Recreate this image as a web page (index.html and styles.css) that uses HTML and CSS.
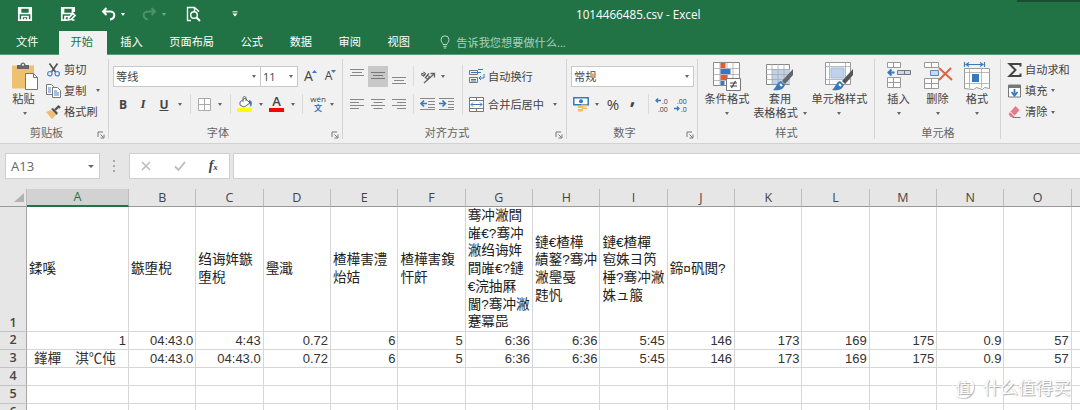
FILE: index.html
```html
<!DOCTYPE html>
<html lang="zh-CN">
<head>
<meta charset="utf-8">
<title>1014466485.csv - Excel</title>
<link rel="stylesheet" href="styles.css">
</head>
<body>
<div class="app">
<header class="titlebar">
  <div class="quick">
    <svg width="16" height="16" viewBox="0 0 16 16" fill="none" stroke="#fff" stroke-width="1.700"><path d="M1.800 1.800h12.400v12.400H1.800zM3.500 2v5.500h9V2M5 14v-3.500h6V14M8 12v2"/></svg>
    <svg width="16" height="16" viewBox="0 0 16 16" fill="none" stroke="#fff" stroke-width="1.700"><path d="M14.200 6V1.800H1.800v12.400H7M3.500 2v5.500h9V2M5 14v-3.500h4M8 14l1-2.500 4-4 2 2-4 4zM12 14h2.500"/></svg>
    <svg width="15" height="14" viewBox="0 0 15 14" fill="none" stroke="#fff" stroke-width="2"><path d="M5.500 1L2 4.500 5.500 8M2 4.500h7c6 0 5.500 7 0 8"/></svg>
    <i class="arrow white"></i>
    <svg class="dim" width="15" height="14" viewBox="0 0 15 14" fill="none" stroke="#8fc3a5" stroke-width="2"><path d="M9.500 1L13 4.500 9.500 8M13 4.500H6c-6 0-5.500 7 0 8"/></svg>
    <i class="arrow white dim"></i>
    <svg width="15" height="16" viewBox="0 0 15 16" fill="none" stroke="#fff" stroke-width="1.400"><path d="M5 14.500H1.500v-13h7l4 3.500v1M8.500 1.500V5"/><circle cx="8" cy="9" r="3.300"/><path d="M10.500 11.500l3.500 3.500" stroke-width="2"/></svg>
    <svg width="6" height="6" viewBox="0 0 6 6"><path d="M.5.8h5" stroke="#fff"/><path d="M.5 2.500h5L3 5.500z" fill="#fff"/></svg>
  </div>
  <div class="title">1014466485.csv - Excel</div>
  <div class="shade"></div>
</header>
<nav class="tabs">
  <span>文件</span><span class="active">开始</span><span>插入</span><span>页面布局</span><span>公式</span><span>数据</span><span>审阅</span><span>视图</span>
  <div class="tell"><svg width="10" height="14" viewBox="0 0 10 14" fill="none" stroke="#b5d8c4"><path d="M3 9.500C3 8 1 7 1 4.800a4 4 0 0 1 8 0C9 7 7 8 7 9.500zM3.200 11.300h3.600M3.800 13h2.400"/></svg>告诉我您想要做什么...</div>
</nav>
<section class="ribbon">
  <div class="group g-clip">
    <div class="body clip">
      <div class="big paste">
        <svg width="28" height="29" viewBox="0 0 28 29"><path d="M1 3.500h22v23H1z" fill="#eec16f"/><path d="M6 3h3.500c0-3.500 5-3.500 5 0H18v4H6z" fill="#666"/><circle cx="12" cy="2.700" r="1" fill="#fff"/><path d="M14.500 11.500h8l4 4v12h-12z" fill="#fff" stroke="#777"/><path d="M22.500 11.500v4h4" fill="none" stroke="#777"/></svg>
        <span>粘贴</span><i class="arrow"></i>
      </div>
      <div class="list">
        <div class="item"><svg width="14" height="14" viewBox="0 0 14 14" fill="none"><path d="M3 .5l6 8.500M11 .5L5 9" stroke="#555" stroke-width="1.700"/><circle cx="3.300" cy="10.700" r="2.200" stroke="#4a83c3" stroke-width="1.200"/><circle cx="10.700" cy="10.700" r="2.200" stroke="#4a83c3" stroke-width="1.200"/></svg><span>剪切</span></div>
        <div class="item"><svg width="15" height="14" viewBox="0 0 15 14" fill="#fff" stroke="#777"><path d="M.5.5h5l2 2v8h-7z"/><path d="M6.500 3.500h5l3 3v7h-8z"/><path d="M2 4h3M2 6h3M2 8h3M8 7h3M8 9h5M8 11h5" stroke="#4a83c3"/></svg><span>复制</span><i class="arrow"></i></div>
        <div class="item"><svg width="15" height="14" viewBox="0 0 15 14"><path d="M0 7l5-2 5 5-4 4z" fill="#eebd70"/><path d="M5 4l2-1 5 5-1.500 2z" fill="#555"/><path d="M9 5l4-4M12 1l2 2" stroke="#555" stroke-width="2.400"/></svg><span>格式刷</span></div>
      </div>
    </div>
    <div class="foot"><span>剪贴板</span><svg class="launch" viewBox="0 0 8 8"><path d="M1 6V1h5M3.500 3.500l3 3M7 3.500V7H3.500" fill="none" stroke="#777"/></svg></div>
  </div>
  <div class="group g-font">
    <div class="body">
      <div class="row font1"><div class="combo"><span>等线</span><i class="arrow"></i></div><div class="combo size"><span>11</span><i class="arrow"></i></div>
        <span class="grow">A<svg width="5" height="3"><path d="M0 3h5L2.500 0z" fill="#3878bd"/></svg></span><span class="grow small">A<svg width="5" height="3"><path d="M0 0h5L2.500 3z" fill="#3878bd"/></svg></span></div>
      <div class="row font2">
        <b>B</b><b class="ital">I</b><b class="under">U</b><i class="arrow"></i><i class="sep"></i>
        <svg width="13" height="13" viewBox="0 0 13 13" fill="#fff" stroke="#aaa"><path d="M.5.5h12v12H.5zM6.500 0v13M0 6.500h13"/></svg><i class="arrow"></i><i class="sep"></i>
        <svg width="16" height="16" viewBox="0 0 16 16"><path d="M3 6l5-4 5 5-6 4-4-2z" fill="#fff" stroke="#666"/><path d="M6 6V2c0-2 3-2 3 0v3" fill="none" stroke="#666"/><path d="M12 4c4 1 3 4 2 7-1-1-1-4-2-4z" fill="#3878bd"/><path d="M0 12h15v4H0z" fill="#ff0"/></svg><i class="arrow"></i>
        <span class="fcolor">A</span><i class="arrow"></i><i class="sep"></i>
        <span class="wen"><span>wén</span><em>文</em></span><i class="arrow"></i>
      </div>
    </div>
    <div class="foot"><span>字体</span><svg class="launch" viewBox="0 0 8 8"><path d="M1 6V1h5M3.500 3.500l3 3M7 3.500V7H3.500" fill="none" stroke="#777"/></svg></div>
  </div>
  <div class="group g-align">
    <div class="body alignbody">
      <div class="aligns">
        <div class="row al">
          <svg width="14" height="18" viewBox="0 0 14 18" stroke="#888"><path d="M0 2.500h14M2 5.500h10M0 8.500h14"/></svg>
          <span class="on"><svg width="14" height="10" viewBox="0 0 14 10" stroke="#777"><path d="M0 1.500h14M2 4.500h10M0 7.500h14"/></svg></span>
          <svg width="14" height="18" viewBox="0 0 14 18" stroke="#888"><path d="M0 10.500h14M2 13.500h10M0 16.500h14"/></svg>
          <i class="sep"></i>
          <svg width="16" height="15" viewBox="0 0 16 15"><text x="1" y="7" transform="rotate(40 3 5)" class="ab">ab</text><path d="M4 14L14 5M14.500 8.500V4.500h-4" fill="none" stroke="#666" stroke-width="1.300"/></svg><i class="arrow"></i>
        </div>
        <div class="row al">
          <svg width="14" height="12" viewBox="0 0 14 12" stroke="#888"><path d="M0 1.500h14M0 4.500h9M0 7.500h14M0 10.500h9"/></svg>
          <svg width="14" height="12" viewBox="0 0 14 12" stroke="#888"><path d="M0 1.500h14M2.500 4.500h9M0 7.500h14M2.500 10.500h9"/></svg>
          <svg width="14" height="12" viewBox="0 0 14 12" stroke="#888"><path d="M0 1.500h14M5 4.500h9M0 7.500h14M5 10.500h9"/></svg>
          <i class="sep"></i>
          <svg width="16" height="14" viewBox="0 0 16 14"><path d="M0 1.500h15M8 4.500h7M8 7.500h7M8 10.500h7M0 12.500h15" stroke="#888"/><path d="M7 6.500H1M4 3.500l-3 3 3 3" fill="none" stroke="#3878bd" stroke-width="1.600"/></svg>
          <svg width="16" height="14" viewBox="0 0 16 14"><path d="M0 1.500h15M9 4.500h6M9 7.500h6M9 10.500h6M0 12.500h15" stroke="#888"/><path d="M0 6.500h6M3.500 3.500l3 3-3 3" fill="none" stroke="#3878bd" stroke-width="1.600"/></svg>
        </div>
      </div>
      <i class="sep tall"></i>
      <div class="wraps">
        <div class="row"><svg width="16" height="15" viewBox="0 0 16 15" fill="none" stroke="#777"><path d="M.5 1.500h8v4h-8zM.5 8.500h8v5h-8z"/><path d="M2 3.500h10M2 10.500h5M2 12h5" stroke="#3878bd"/><path d="M9 .5h5M15 5v4h-5M12 7l-2 2 2 2" stroke="#3878bd"/></svg><span>自动换行</span></div>
        <div class="row"><svg width="16" height="15" viewBox="0 0 16 15" fill="#fff" stroke="#777"><path d="M.5.5h14v14H.5zM.5 3.500h14M.5 11.500h14M7.500.5v3M7.500 11.500v3"/><path d="M2 7.500h11M4 5.500l-2 2 2 2M11 5.500l2 2-2 2" fill="none" stroke="#3878bd"/></svg><span>合并后居中</span><i class="arrow"></i></div>
      </div>
    </div>
    <div class="foot"><span>对齐方式</span><svg class="launch" viewBox="0 0 8 8"><path d="M1 6V1h5M3.500 3.500l3 3M7 3.500V7H3.500" fill="none" stroke="#777"/></svg></div>
  </div>
  <div class="group g-num">
    <div class="body">
      <div class="row"><div class="combo num"><span>常规</span><i class="arrow"></i></div></div>
      <div class="row num2">
        <svg width="16" height="15" viewBox="0 0 16 15"><path d="M.8.8h14.400v7H.8z" fill="#fff" stroke="#3878bd" stroke-width="1.500"/><circle cx="8" cy="4.300" r="2" fill="#3878bd"/><path d="M8 7.500h6v2H8zM9 10.500h5v1.500H9zM5 9h5v2H5zM5 12h5v2.500H5z" fill="#eebd60"/></svg><i class="arrow"></i>
        <span class="pct">%</span><span class="comma">,</span><i class="sep"></i>
        <svg class="dec" width="15" height="15" viewBox="0 0 15 15"><path d="M6 3.500H1M3 1.500l-2 2 2 2" fill="none" stroke="#3878bd" stroke-width="1.300"/><text x="7" y="7">.0</text><text x="3" y="14.500">.00</text></svg>
        <svg class="dec" width="15" height="15" viewBox="0 0 15 15"><text x="3" y="7">.00</text><path d="M0 11.500h5M3 9.500l2 2-2 2" fill="none" stroke="#3878bd" stroke-width="1.300"/><text x="7" y="14.500">.0</text></svg>
      </div>
    </div>
    <div class="foot"><span>数字</span><svg class="launch" viewBox="0 0 8 8"><path d="M1 6V1h5M3.500 3.500l3 3M7 3.500V7H3.500" fill="none" stroke="#777"/></svg></div>
  </div>
  <div class="group g-style">
    <div class="body bigs">
      <div class="big"><svg width="28" height="29" viewBox="0 0 28 29"><path d="M.5.500h26v23H.5z" fill="#fff" stroke="#888"/><path d="M7 .5v23M14 .5v23M20 .5v23M.5 6.500h26M.5 12.500h26M.5 18.500h26" stroke="#aaa" stroke-width=".8"/><path d="M7.500 1h5v5h-5zM7.500 13h7v5h-7z" fill="#df5b39"/><path d="M7.500 7h10v5h-10zM7.500 19h4v4h-4z" fill="#3878bd"/><path d="M13.500 16.500h14v12h-14z" fill="#fff" stroke="#777"/><path d="M17 21h7M17 24h7M22.500 19l-4 7" stroke="#444" stroke-width="1.200"/></svg><span>条件格式</span><i class="arrow"></i></div>
      <div class="big"><svg width="28" height="29" viewBox="0 0 28 29"><path d="M.5 2.500h23v20H.5z" fill="#fff" stroke="#888"/><path d="M6 7h18v15H6z" fill="#bed3ea"/><path d="M6 2v20M12 2v20M18 2v20M0 7.500h24M0 12.500h24M0 17.500h24" stroke="#aaa" stroke-width=".8"/><path d="M27 7v6l-8 9-3-3z" fill="#666"/><path d="M15 19l4 4c-2 5-7 6-12 5 3-2 4-8 8-9z" fill="#3878bd"/><path d="M14 22l2 2" stroke="#fff" stroke-width="2"/></svg><span>套用</span><span class="second">表格格式<i class="arrow"></i></span></div>
      <div class="big"><svg width="28" height="29" viewBox="0 0 28 29"><path d="M.5.500h25v22H.5z" fill="#fff" stroke="#999"/><path d="M4.500.5v22M20.500.5v22M.5 4.500h25M.5 17.500h25" stroke="#aaa" stroke-width=".8"/><path d="M6 6h13v10H6z" fill="#bed3ea" stroke="#9db9d9"/><path d="M28 7v6l-8 9-3-3z" fill="#555"/><path d="M15 19l4 4c-2 5-7 6-12 5 3-2 4-8 8-9z" fill="#3878bd"/><path d="M14 22l2 2" stroke="#fff" stroke-width="2"/></svg><span>单元格样式</span><i class="arrow"></i></div>
    </div>
    <div class="foot"><span>样式</span></div>
  </div>
  <div class="group g-cells">
    <div class="body bigs">
      <div class="big"><svg width="26" height="29" viewBox="0 0 26 29"><path d="M1.500.5h13v5h-13zM7.500.5v5M1.500 15.500h13v10h-13zM7.500 15.500v10M1.500 20.500h13" fill="#fff" stroke="#999"/><path d="M11.500 8.500h13v4h-13zM18.500 8.500v4" fill="#c6d9ef" stroke="#777"/><path d="M8.500 10.500H2.500M5.500 7.500l-3 3 3 3" fill="none" stroke="#3878bd" stroke-width="2"/></svg><span>插入</span><i class="arrow"></i></div>
      <div class="big"><svg width="28" height="29" viewBox="0 0 28 29"><path d="M.5.500h14v5H.5zM7.500.5v5M.5 16.500h14v10H.5zM7.500 16.500v10M.5 21.500h14" fill="#fff" stroke="#999"/><path d="M6.500 8.500h8v5h-8z" fill="#c6d9ef" stroke="#5f88b8"/><path d="M15 6l13 12M27 6L15 18" stroke="#e0603f" stroke-width="1.900"/></svg><span>删除</span><i class="arrow"></i></div>
      <div class="big"><svg width="28" height="29" viewBox="0 0 28 29"><path d="M1.500 0v5M21.500 0v5M3 2.500h17M6 .5l-3 2 3 2M17 .5l3 2-3 2" fill="none" stroke="#3878bd" stroke-width="1.100"/><path d="M1.500 6.500h25v20l-5-1-2 2-6-2-3 2-9-1z" fill="#fff" stroke="#999"/><path d="M6.500 6v20M18.500 6v20M1 10.500h26M1 21.500h26" stroke="#aaa" stroke-width=".8"/><path d="M9 12h7v8H9z" fill="#3878bd"/></svg><span>格式</span><i class="arrow"></i></div>
    </div>
    <div class="foot"><span>单元格</span></div>
  </div>
  <div class="group g-edit">
    <div class="body list">
      <div class="item"><svg width="14" height="14" viewBox="0 0 14 14"><path d="M13 3.500V1H2l6 6-6 6h11v-2.500" fill="none" stroke="#444" stroke-width="2"/></svg><span>自动求和</span></div>
      <div class="item"><svg width="14" height="14" viewBox="0 0 14 14"><path d="M1 1h12v12H1z" fill="#fff" stroke="#777"/><path d="M1 1h12v3H1z" fill="#777"/><path d="M7 5v6M4 8l3 3.500L10 8" fill="none" stroke="#3878bd" stroke-width="1.800"/></svg><span>填充</span><i class="arrow"></i></div>
      <div class="item"><svg width="14" height="14" viewBox="0 0 14 14"><path d="M1 9l7-8 4 4-6 7H3z" fill="#e8798d"/><path d="M3 7l4 4" stroke="#fff"/><path d="M5 12.500h8" stroke="#777"/></svg><span>清除</span><i class="arrow"></i></div>
    </div>
  </div>
</section>
<section class="formula">
  <div class="namebox"><span>A13</span><i class="arrow large"></i></div>
  <svg class="dots" width="2" height="12" viewBox="0 0 2 12" fill="#aaa"><path d="M0 0h2v2H0zM0 5h2v2H0zM0 10h2v2H0z"/></svg>
  <div class="fxbox"><svg width="10" height="10" viewBox="0 0 10 10"><path d="M1 1l8 8M9 1L1 9" stroke="#bbb" stroke-width="1.500"/></svg><svg width="12" height="10" viewBox="0 0 12 10"><path d="M1 5.500L4.500 9 11 1" fill="none" stroke="#bbb" stroke-width="1.800"/></svg><span class="fx">f<small>x</small></span></div>
  <div class="input"></div>
</section>
<table class="sheet">
  <colgroup><col class="c0"><col class="cA"><col><col><col><col><col><col><col><col><col><col><col><col><col><col><col></colgroup>
  <tr class="heads"><th><svg width="10" height="9"><path d="M10 0v9H0z" fill="#b3b3b3"/></svg></th><th class="sel">A</th><th>B</th><th>C</th><th>D</th><th>E</th><th>F</th><th>G</th><th>H</th><th>I</th><th>J</th><th>K</th><th>L</th><th>M</th><th>N</th><th>O</th><th></th></tr>
  <tr class="first"><th>1</th><td>鍒嗘</td><td>鏃堕棿</td><td>绉诲姩鏃<br>堕棿</td><td>璺濈</td><td>楂樺害澧<br>炲姞</td><td>楂樺害鍑<br>忓皯</td><td>骞冲潎閰<br>嶉€?骞冲<br>潎绉诲姩<br>閰嶉€?鏈<br>€浣抽厤<br>閫?骞冲潎<br>蹇冪巼</td><td>鏈€楂樺<br>績鐜?骞冲<br>潎璺戞<br>韪忛</td><td>鏈€楂樿<br>窇姝ヨ笍<br>棰?骞冲潎<br>姝ュ箙</td><td>鍗¤矾閲?</td><td></td><td></td><td></td><td></td><td></td><td></td></tr>
  <tr><th>2</th><td>1</td><td>04:43.0</td><td>4:43</td><td>0.72</td><td>6</td><td>5</td><td>6:36</td><td>6:36</td><td>5:45</td><td>146</td><td>173</td><td>169</td><td>175</td><td>0.9</td><td>57</td><td></td></tr>
  <tr><th>3</th><td class="left">鎽樿<span class="gap"></span>淇℃伅</td><td>04:43.0</td><td>04:43.0</td><td>0.72</td><td>6</td><td>5</td><td>6:36</td><td>6:36</td><td>5:45</td><td>146</td><td>173</td><td>169</td><td>175</td><td>0.9</td><td>57</td><td></td></tr>
  <tr><th>4</th><td></td><td></td><td></td><td></td><td></td><td></td><td></td><td></td><td></td><td></td><td></td><td></td><td></td><td></td><td></td><td></td></tr>
  <tr><th>5</th><td></td><td></td><td></td><td></td><td></td><td></td><td></td><td></td><td></td><td></td><td></td><td></td><td></td><td></td><td></td><td></td></tr>
  <tr><th>6</th><td></td><td></td><td></td><td></td><td></td><td></td><td></td><td></td><td></td><td></td><td></td><td></td><td></td><td></td><td></td><td></td></tr>
</table>
<div class="watermark"><span class="coin">值</span><span>什么值得买</span></div>
</div>
</body>
</html>
```
FILE: styles.css
```css
* { box-sizing: border-box; }
body { margin: 0; font-family: "Open Sans", "Noto Sans CJK SC", sans-serif; font-size: 11.2px; color: #444; }
svg { display: block; flex: none; overflow: visible; }
.app { position: relative; width: 1080px; height: 410px; overflow: hidden; background: #e6e6e6; }

.titlebar { position: relative; display: flex; height: 31px; background: #217346; color: #fff; }
.quick { display: grid; grid-template-columns: 43px 41px 20px 21px 20px 24px 46px 10px; width: 576px; padding-left: 17px; height: 28px; align-items: center; }
.title { width: 130px; line-height: 29px; font-size: 11.7px; white-space: nowrap; }
.shade { position: absolute; right: 0; top: 0; width: 63px; height: 2px; background: #174d31; }
.dim { opacity: .4; }
.arrow { display: block; flex: none; width: 0; height: 0; border: 2.5px solid transparent; border-top: 3px solid #666; border-bottom: 0; }
.arrow.white { border-top-color: #fff; }
.arrow.large { border-width: 3.5px 3.5px 0; }

.tabs { display: flex; height: 24px; background: #217346; color: #fff; line-height: 21px; border-bottom: 1px solid #5c9b79; }
.tabs span { padding: 0 13.3px; white-space: nowrap; }
.tabs span:first-child { width: 59px; padding-left: 16px; }
.tabs .active { width: 48px; padding: 0 0 0 11.5px; height: 24px; background: #f1f1f1; color: #217346; }
.tabs .tell { display: flex; align-items: center; gap: 6px; height: 22px; margin-left: 17px; color: #a9cfb9; white-space: nowrap; }

.ribbon { display: flex; height: 89px; background: #f1f1f1; border-bottom: 1px solid #d2d2d2; }
.group { position: relative; flex: none; display: flex; flex-direction: column; padding-top: 7px; background: linear-gradient(#d4d4d4, #d4d4d4) right 4px / 1px 80px no-repeat; }
.g-clip { width: 109px; }
.g-font { width: 234px; }
.g-align { width: 224px; }
.g-num { width: 131px; }
.g-style { width: 177px; }
.g-cells { width: 126px; }
.g-edit { width: 79px; background: none; }
.body { height: 64px; }
.foot { display: flex; height: 16px; line-height: 14px; color: #666; }
.foot span { flex: 1; text-align: center; }
.launch { width: 8px; height: 8px; margin: 5px 4px 0; }
.clip { display: flex; padding-left: 11px; }
.big { display: flex; flex-direction: column; align-items: center; white-space: nowrap; }
.big span { line-height: 14px; margin-top: 1px; }
.big .arrow { margin-top: 6px; }
.big .second { display: flex; gap: 5px; margin-top: 0; }
.paste { width: 28px; }
.paste span { margin-left: -3px; }
.paste .arrow { margin-left: -1px; }
.clip .list { margin-left: 7px; }
.item { display: flex; align-items: center; height: 21.5px; white-space: nowrap; line-height: 14px; }
.list .item:first-child { height: 15px; margin-bottom: 3px; }
.item svg { width: 15px; }
.item span { margin-left: 3px; }
.item .arrow { margin-left: 10px; }
.g-edit .item .arrow { margin-left: 4px; }
.g-edit .body { padding-left: 6px; }

.row { display: flex; align-items: center; height: 28px; white-space: nowrap; }
.g-font .body { padding-left: 4px; }
.combo { display: flex; align-items: center; justify-content: space-between; width: 148px; height: 21px; margin-right: -1px; padding: 0 4px 0 2px; background: #fff; border: 1px solid #c9c9c9; }
.combo.size { width: 38px; font-size: 11px; }
.combo.num { width: 123px; }
.grow { display: flex; align-items: center; margin-left: 7px; font-size: 14px; line-height: 14px; }
.grow svg { margin: -10px 0 0 -1px; }
.grow.small { font-size: 12px; margin-left: 8px; }
.font2 { display: grid; grid-template-columns: 20px 20px 22px 10px 10px 18px 14px 6px 24px 7px 25px 7px 12px 20px 8px; justify-items: center; }
.font2 b { font-size: 12px; }
.font2 .ital { font-style: italic; font-family: "Liberation Serif", serif; font-size: 13px; }
.under { text-decoration: underline; }
.sep { display: block; width: 1px; height: 20px; background: #dadada; }
.sep.tall { height: 50px; margin-top: 3px; }
.fcolor { width: 15px; height: 16px; font-size: 13px; font-weight: 600; line-height: 11px; text-align: center; border-bottom: 4px solid #f00; }
.wen { display: flex; flex-direction: column; align-items: center; font-size: 8px; line-height: 7px; }
.wen em { color: #3878bd; font-style: normal; font-weight: bold; font-size: 8px; line-height: 11px; }

.alignbody { display: flex; padding-left: 4px; }
.aligns { width: 115px; }
.al { display: grid; grid-template-columns: 20px 22px 19px 10px 20px 18px; justify-items: center; }
.al .arrow { margin-left: -8px; }
.on { display: grid; place-items: center; width: 20px; height: 21px; background: #c8c8c8; }
.ab { font: bold 8px "Open Sans", sans-serif; fill: #555; }
.wraps { margin-left: 6px; }
.wraps span { margin-left: 3px; }
.wraps .arrow { margin-left: 9px; }
.g-num .body { padding-left: 4px; }
.num2 { display: grid; grid-template-columns: 20px 11px 22px 17px 14px 14px 25px; justify-items: center; }
.pct { font-size: 15px; }
.comma { font-size: 20px; font-weight: bold; line-height: 10px; margin-top: -15px; }
.dec text { font: 7px "Open Sans", sans-serif; fill: #444; }
.bigs { display: grid; }
.g-style .bigs { grid-template-columns: 58px 48px 71px; justify-items: center; }
.g-cells .bigs { grid-template-columns: 47px 31px 48px; justify-items: center; }

.formula { display: flex; align-items: flex-start; height: 45px; padding: 9px 0 0 5px; }
.namebox { display: flex; justify-content: space-between; align-items: center; width: 95px; height: 26px; padding: 0 5px 0 5px; background: #fff; border: 1px solid #cfcfcf; font-size: 13px; color: #666; }
.dots { margin: 7px 14px 0 13px; }
.fxbox { display: flex; align-items: center; width: 102px; height: 26px; padding-left: 11px; background: #fff; border: 1px solid #cfcfcf; }
.fxbox svg + svg { margin-left: 23px; }
.fx { margin-left: 23px; font: italic bold 14px "Liberation Serif", serif; }
.fx small { font-size: 9px; }
.input { width: 850px; height: 26px; margin-left: 3px; background: #fff; border: 1px solid #cfcfcf; border-right: 0; }

.sheet { width: 1139.1px; table-layout: fixed; border-collapse: separate; border-spacing: 0; background: #fff; font-family: "Liberation Sans", "Noto Sans CJK SC", sans-serif; font-size: 13px; }
.sheet col { width: 67.35px; }
.sheet .c0 { width: 27px; }
.sheet .cA { width: 102px; }
.sheet th, .sheet td { padding: 0; border-right: 1px solid #d6d6d6; border-bottom: 1px solid #d6d6d6; }
.sheet th { background: #e6e6e6; border-bottom-color: #c4c4c4; border-right-color: #a6a6a6; font: 600 12.5px "Open Sans", sans-serif; line-height: 16px; color: #444; }
.sheet tr { height: 17.95px; }
.sheet .heads th { height: 18px; border-right-color: #bcbcbc; border-bottom-color: #999; font-weight: 400; }
.heads svg { margin: 0 0 0 14px; }
.sheet .heads .sel { background: #d2d2d2; color: #217346; border-bottom: 2px solid #217346; }
.sheet .first { height: 123px; }
.sheet .first th { vertical-align: bottom; }
.sheet td { text-align: right; padding: 1px 2px 0 0; line-height: 15.9px; white-space: nowrap; color: #333; }
.sheet .first td { padding: 0 0 0 3px; text-align: left; vertical-align: middle; font-size: 13.6px; line-height: 17.5px; color: #222; }
.sheet .first td { padding-left: 2px; line-height: 17.7px; }
.sheet .left { text-align: left; padding-left: 7px; font-size: 13.6px; }
.gap { display: inline-block; width: 14px; }

.watermark { position: absolute; left: 952px; top: 375px; display: flex; align-items: center; gap: 9px; color: #fff; font-size: 17.5px; line-height: 24px; text-shadow: 1px 1px 1px #aaa, 0 0 1px #ccc; white-space: nowrap; }
.coin { width: 22px; height: 22px; border: 1px solid #fff; border-radius: 50%; box-shadow: 1px 1px 1px #bbb; font-size: 15px; line-height: 20px; text-align: center; }
```
